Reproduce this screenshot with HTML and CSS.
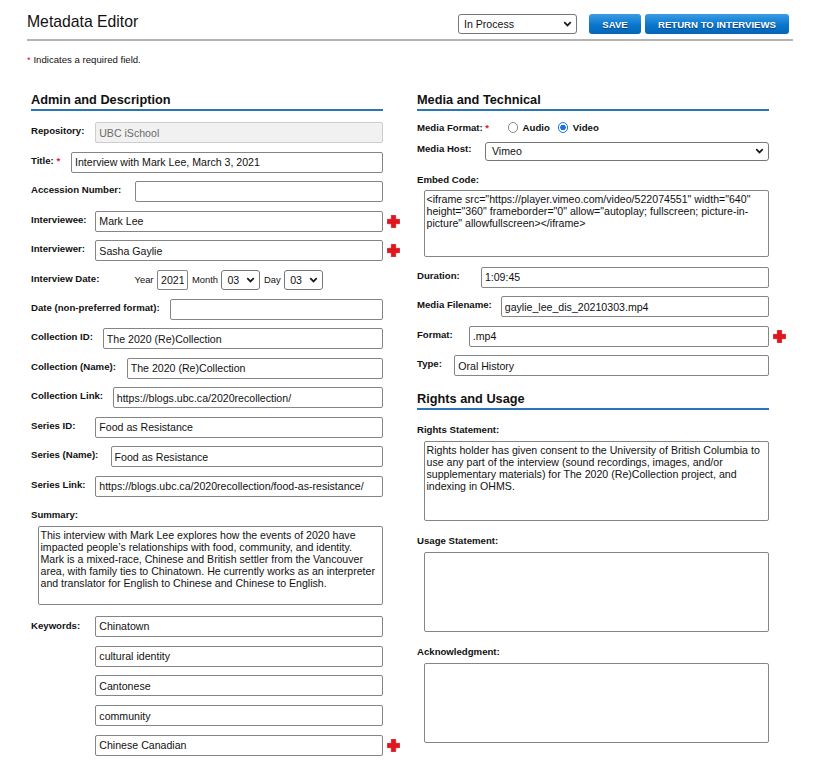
FILE: index.html
```html
<!DOCTYPE html>
<html lang="en">
<head>
<meta charset="utf-8">
<title>Metadata Editor</title>
<link rel="stylesheet" href="styles.css">
</head>
<body>
<div class="page">
  <header class="topbar">
    <h1 class="title">Metadata Editor</h1>
    <div class="actions">
      <div class="select select-status"><span>In Process</span><svg class="chev" viewBox="0 0 10 7"><path d="M1.2 1.4 5 5.2 8.8 1.4" fill="none" stroke="#1a1a1a" stroke-width="2"/></svg></div>
      <button class="btn btn-save">SAVE</button>
      <button class="btn btn-return">RETURN TO INTERVIEWS</button>
    </div>
  </header>

  <p class="note"><span class="req">*</span> Indicates a required field.</p>

  <div class="columns">
    <section class="col">
      <h2 class="section-title">Admin and Description</h2>

      <div class="row"><label class="lbl">Repository:</label><input class="field field-disabled" value="UBC iSchool" disabled></div>
      <div class="row"><label class="lbl">Title: <span class="req">*</span></label><input class="field" value="Interview with Mark Lee, March 3, 2021"></div>
      <div class="row"><label class="lbl lbl-accession">Accession Number:</label><input class="field" value=""></div>
      <div class="row"><label class="lbl lbl-interviewee">Interviewee:</label><input class="field" value="Mark Lee"><svg class="add" viewBox="0 0 13 13"><path d="M4.3 0.3h4.4v4h4v4.4h-4v4h-4.4v-4h-4v-4.4h4z" fill="#e3141c" stroke="#c10f17" stroke-width="0.6"/></svg></div>
      <div class="row"><label class="lbl lbl-interviewer">Interviewer:</label><input class="field" value="Sasha Gaylie"><svg class="add" viewBox="0 0 13 13"><path d="M4.3 0.3h4.4v4h4v4.4h-4v4h-4.4v-4h-4v-4.4h4z" fill="#e3141c" stroke="#c10f17" stroke-width="0.6"/></svg></div>
      <div class="row">
        <label class="lbl lbl-date">Interview Date:</label>
        <div class="date-group">
          <span>Year</span>
          <input class="field field-year" value="2021">
          <span>Month</span>
          <div class="select select-date"><span>03</span><svg class="chev" viewBox="0 0 10 7"><path d="M1.2 1.4 5 5.2 8.8 1.4" fill="none" stroke="#1a1a1a" stroke-width="2"/></svg></div>
          <span>Day</span>
          <div class="select select-date"><span>03</span><svg class="chev" viewBox="0 0 10 7"><path d="M1.2 1.4 5 5.2 8.8 1.4" fill="none" stroke="#1a1a1a" stroke-width="2"/></svg></div>
        </div>
      </div>
      <div class="row"><label class="lbl">Date (non-preferred format):</label><input class="field" value=""></div>
      <div class="row"><label class="lbl lbl-coll-id">Collection ID:</label><input class="field" value="The 2020 (Re)Collection"></div>
      <div class="row"><label class="lbl">Collection (Name):</label><input class="field" value="The 2020 (Re)Collection"></div>
      <div class="row"><label class="lbl lbl-coll-link">Collection Link:</label><input class="field" value="https://blogs.ubc.ca/2020recollection/"></div>
      <div class="row"><label class="lbl lbl-series-id">Series ID:</label><input class="field" value="Food as Resistance"></div>
      <div class="row"><label class="lbl lbl-series-name">Series (Name):</label><input class="field" value="Food as Resistance"></div>
      <div class="row"><label class="lbl lbl-series-link">Series Link:</label><input class="field" value="https://blogs.ubc.ca/2020recollection/food-as-resistance/"></div>

      <div class="stack stack-summary">
        <label class="lbl">Summary:</label>
        <textarea class="area area-summary">This interview with Mark Lee explores how the events of 2020 have
impacted people’s relationships with food, community, and identity.
Mark is a mixed-race, Chinese and British settler from the Vancouver
area, with family ties to Chinatown. He currently works as an interpreter
and translator for English to Chinese and Chinese to English.</textarea>
      </div>

      <div class="row row-keywords">
        <label class="lbl lbl-keywords">Keywords:</label>
        <div class="kw-list">
          <div class="kw-item"><input class="field" value="Chinatown"></div>
          <div class="kw-item"><input class="field" value="cultural identity"></div>
          <div class="kw-item"><input class="field" value="Cantonese"></div>
          <div class="kw-item"><input class="field" value="community"></div>
          <div class="kw-item"><input class="field" value="Chinese Canadian"><svg class="add" viewBox="0 0 13 13"><path d="M4.3 0.3h4.4v4h4v4.4h-4v4h-4.4v-4h-4v-4.4h4z" fill="#e3141c" stroke="#c10f17" stroke-width="0.6"/></svg></div>
        </div>
      </div>
    </section>

    <section class="col">
      <h2 class="section-title">Media and Technical</h2>

      <div class="row row-radio">
        <label class="lbl">Media Format: <span class="req">*</span></label>
        <div class="radios">
          <span class="opt"><span class="radio"></span>Audio</span>
          <span class="opt"><span class="radio radio-on"></span>Video</span>
        </div>
      </div>
      <div class="row"><label class="lbl lbl-host">Media Host:</label><div class="select select-host"><span>Vimeo</span><svg class="chev" viewBox="0 0 10 7"><path d="M1.2 1.4 5 5.2 8.8 1.4" fill="none" stroke="#1a1a1a" stroke-width="2"/></svg></div></div>

      <div class="stack stack-embed">
        <label class="lbl">Embed Code:</label>
        <textarea class="area area-embed">&lt;iframe src="https://player.vimeo.com/video/522074551" width="640" height="360" frameborder="0" allow="autoplay; fullscreen; picture-in-picture" allowfullscreen&gt;&lt;/iframe&gt;</textarea>
      </div>

      <div class="row"><label class="lbl lbl-duration">Duration:</label><input class="field" value="1:09:45"></div>
      <div class="row"><label class="lbl lbl-filename">Media Filename:</label><input class="field" value="gaylie_lee_dis_20210303.mp4"></div>
      <div class="row"><label class="lbl lbl-format">Format:</label><input class="field" value=".mp4"><svg class="add" viewBox="0 0 13 13"><path d="M4.3 0.3h4.4v4h4v4.4h-4v4h-4.4v-4h-4v-4.4h4z" fill="#e3141c" stroke="#c10f17" stroke-width="0.6"/></svg></div>
      <div class="row"><label class="lbl lbl-type">Type:</label><input class="field" value="Oral History"></div>

      <h2 class="section-title section-title-rights">Rights and Usage</h2>

      <div class="stack stack-rights">
        <label class="lbl">Rights Statement:</label>
        <textarea class="area area-rights">Rights holder has given consent to the University of British Columbia to use any part of the interview (sound recordings, images, and/or supplementary materials) for The 2020 (Re)Collection project, and indexing in OHMS.</textarea>
      </div>
      <div class="stack stack-rights">
        <label class="lbl">Usage Statement:</label>
        <textarea class="area area-rights"></textarea>
      </div>
      <div class="stack stack-rights">
        <label class="lbl">Acknowledgment:</label>
        <textarea class="area area-rights"></textarea>
      </div>
    </section>
  </div>
</div>
</body>
</html>
```

FILE: styles.css
```css
* { box-sizing: border-box; }

body {
  margin: 0;
  background: #fff;
  color: #111;
  font-family: "Liberation Sans", Arial, sans-serif;
}

.page {
  width: 793px;
  padding-left: 27px;
}

/* header */
.topbar {
  display: flex;
  align-items: flex-start;
  padding: 13px 4px 5px 0;
  border-bottom: 2px solid #b4b4b4;
}
.title {
  margin: 0;
  font-size: 15.75px;
  line-height: 18px;
  font-weight: normal;
  color: #111;
}
.actions {
  margin-left: auto;
  margin-top: 1px;
  display: flex;
}
.select {
  display: flex;
  align-items: center;
  justify-content: space-between;
  height: 20px;
  border: 1px solid #767676;
  border-radius: 3px;
  background: #fff;
  padding: 0 4px 0 5px;
  font-size: 10.6px;
  color: #111;
}
.select-status { width: 119px; }
.chev { width: 9px; height: 6px; flex: none; }

.btn {
  height: 20px;
  border: 0;
  border-radius: 3px;
  padding: 0;
  background: linear-gradient(#3a9de4, #0b76cd 55%, #0465b7);
  color: #fff;
  font: bold 9.6px "Liberation Sans", Arial, sans-serif;
  text-shadow: 0 1px 1px rgba(0, 30, 70, 0.6);
}
.btn-save { width: 52px; margin-left: 12px; }
.btn-return { width: 144px; margin-left: 4px; }

.note {
  margin: 13px 0 0;
  font-size: 9.625px;
  line-height: 11px;
}
.req { color: #e0161e; }

/* columns */
.columns {
  display: grid;
  grid-template-columns: 352px 352px;
  column-gap: 34px;
  margin: 26.5px 0 0 4px;
  align-items: start;
}
.col {
  display: flex;
  flex-direction: column;
}
.section-title {
  margin: 0 0 11.6px;
  padding-bottom: 2px;
  border-bottom: 2px solid #2a74b8;
  font-size: 12.75px;
  line-height: 15px;
  font-weight: bold;
  color: #111;
}
.section-title-rights { margin: 6.7px 0 0; }

/* rows */
.row {
  display: flex;
  align-items: flex-start;
  margin-bottom: 8.5px;
}
.lbl {
  flex: none;
  font-size: 9.625px;
  line-height: 11px;
  font-weight: bold;
  padding-top: 3px;
  margin-right: 10.8px;
  color: #111;
}
.lbl-accession { margin-right: 14px; }
.lbl-interviewee { margin-right: 8.8px; }
.lbl-interviewer { margin-right: 10.4px; }
.lbl-date { margin-right: 35.2px; }
.lbl-coll-id { margin-right: 9.9px; }
.lbl-coll-link { margin-right: 9.7px; }
.lbl-series-id { margin-right: 20px; }
.lbl-series-name { margin-right: 12.3px; }
.lbl-series-link { margin-right: 9.8px; }
.lbl-keywords { margin-right: 15.2px; padding-top: 4.5px; }
.lbl-host { margin-right: 13.5px; padding-top: 1px; }
.lbl-duration { margin-right: 21.2px; }
.lbl-filename { margin-right: 9px; }
.lbl-format { margin-right: 16px; }
.lbl-type { margin-right: 12.3px; }

.field {
  flex: 1;
  min-width: 0;
  height: 21px;
  border: 1px solid #858585;
  border-radius: 2px;
  padding: 0 3px;
  background: #fff;
  color: #111;
  font: 10.6px "Liberation Sans", Arial, sans-serif;
}
.field-disabled {
  background: #f1f1f1;
  border-color: #cdcdcd;
  color: #6b6b6b;
}

.add {
  flex: none;
  width: 13px;
  height: 13px;
  margin-left: 3.5px;
  margin-right: -16.5px;
  align-self: center;
}

/* date */
.date-group {
  display: flex;
  align-items: center;
  gap: 3.5px;
  font-size: 9.4px;
  color: #111;
}
.field-year {
  flex: none;
  width: 31.4px;
  height: 20.5px;
}
.select-date {
  width: 39px;
  height: 20.5px;
}

/* stacked label + textarea */
.stack {
  display: flex;
  flex-direction: column;
}
.stack .lbl { padding-top: 0; }
.stack-summary { padding-top: 4.4px; margin-bottom: 10.5px; }
.stack-embed { padding-top: 4.4px; margin-bottom: 9.4px; }
.stack-rights { padding-top: 14px; }

.area {
  margin: 6px 0 0 6.5px;
  border: 1px solid #858585;
  border-radius: 2px;
  padding: 2px;
  resize: none;
  overflow: hidden;
  background: #fff;
  color: #111;
  font: 10.6px/normal "Liberation Sans", Arial, sans-serif;
}
.area-summary { height: 79px; }
.area-embed { height: 67px; margin-top: 5.7px; }
.area-rights { height: 80px; }

/* keywords */
.kw-list {
  flex: 1;
  display: flex;
  flex-direction: column;
  gap: 8.75px;
}
.kw-item {
  display: flex;
  align-items: center;
}

/* radios */
.row-radio { margin-bottom: 8.7px; }
.row-radio .lbl { padding-top: 0; margin-right: 0; }
.radios {
  display: flex;
  align-items: center;
  height: 11px;
  margin-left: 18.5px;
}
.opt {
  display: flex;
  align-items: center;
  font-size: 9.625px;
  font-weight: bold;
  color: #111;
}
.opt + .opt { margin-left: 8px; }
.radio {
  flex: none;
  width: 10.5px;
  height: 10.5px;
  margin-right: 4.5px;
  border-radius: 50%;
  border: 1px solid #8a8a8a;
  background: #fff;
}
.radio-on {
  border: 1.5px solid #1a73e8;
  background: radial-gradient(circle, #1a73e8 0 2.5px, #fff 3px);
}

.select-host {
  flex: 1;
  height: 19px;
  padding-left: 6px;
}
```
